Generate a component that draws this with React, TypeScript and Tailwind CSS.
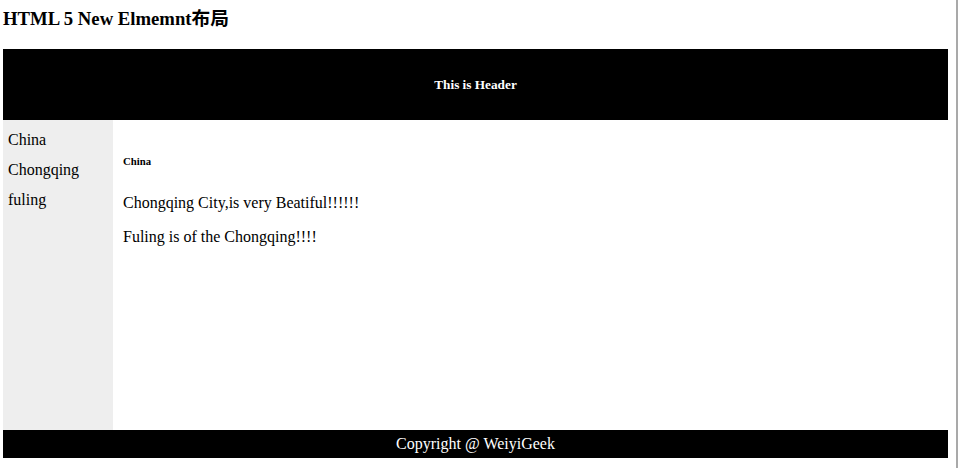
export default function App() {
  const places = ['China', 'Chongqing', 'fuling'];

  return (
    <div
      className="h-[468px] w-[958px] overflow-hidden border-r-2 border-[#a9a9a9] bg-white text-black"
      style={{ fontFamily: '"Liberation Serif", "Noto Sans CJK SC", serif' }}
    >
      <div className="ml-[3px] w-[945px]">
        {/* Title */}
        <h3 className="mt-[8px] mb-[19px] text-[18.72px] font-bold leading-[22px]">
          HTML 5 New Elmemnt布局
        </h3>

        {/* Header */}
        <header className="flex h-[71px] items-center justify-center bg-black">
          <h5 className="text-[13.28px] font-bold leading-[15px] text-white">This is Header</h5>
        </header>

        {/* Body */}
        <div className="flex h-[310px]">
          <nav className="w-[110px] bg-[#eeeeee] p-[5px] text-[16px] leading-[30px]">
            {places.map((p) => (
              <div key={p}>{p}</div>
            ))}
          </nav>
          <section className="flex-1 p-[10px]">
            <h6 className="mt-[25px] text-[10.72px] font-bold leading-[12px]">China</h6>
            <p className="mt-[27px] text-[16px] leading-[18px]">Chongqing City,is very Beatiful!!!!!!</p>
            <p className="mt-[16px] text-[16px] leading-[18px]">Fuling is of the Chongqing!!!!</p>
          </section>
        </div>

        {/* Footer */}
        <footer className="flex h-[28px] items-center justify-center bg-black text-[16px] text-white">
          Copyright @ WeiyiGeek
        </footer>
      </div>
    </div>
  );
}
